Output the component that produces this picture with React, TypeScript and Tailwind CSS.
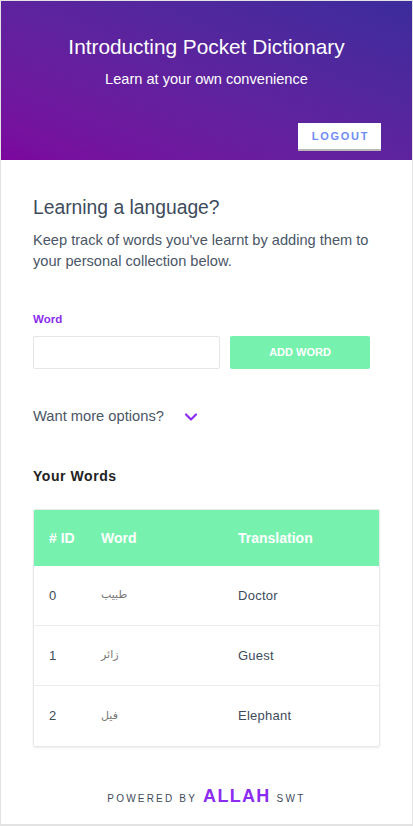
import React from "react";

const rows = [
  { id: 0, word: "طبيب", tr: "Doctor" },
  { id: 1, word: "زائر", tr: "Guest" },
  { id: 2, word: "فيل", tr: "Elephant" },
];

export default function App() {
  return (
    <div
      className="w-[413px] h-[826px] border border-b-2 border-[#e3e3e3] flex flex-col bg-white overflow-hidden"
      style={{ fontFamily: '"Liberation Sans", Arial, sans-serif' }}
    >
      <header className="h-[159px] shrink-0 bg-gradient-to-tr from-[#7c069f] to-[#3b2c9c] flex flex-col items-center pt-[34px] pr-[31px]">
        <h1 className="text-white text-[20.8px] leading-[24px] ml-[31px]">Introducting Pocket Dictionary</h1>
        <p className="text-white text-[14.6px] leading-[17px] mt-[12px] ml-[31px]">Learn at your own convenience</p>
        <div className="self-end mt-[35px]">
          <button className="w-[83px] h-[26px] bg-white text-[#6f8cf3] text-[11px] font-bold tracking-[0.16em] shadow-[0_2px_0_#b8b8b8] flex items-center justify-center pl-[2px]">
            LOGOUT
          </button>
        </div>
      </header>

      <main className="flex-1 flex flex-col px-[32px] pt-[37px]">
        <h2 className="text-[19.3px] leading-[22px] text-[#3d4b5c]">Learning a language?</h2>
        <p className="mt-[11px] text-[14.6px] leading-[21px] text-[#4a5666]">
          Keep track of words you've learnt by adding them to your personal collection below.
        </p>

        <label className="mt-[41px] text-[11.5px] leading-[13px] font-black text-[#8b2cf0]">Word</label>
        <div className="mt-[10px] flex gap-[10px]">
          <input className="w-[187px] h-[33px] border border-[#e6e6e6] rounded-[2px] outline-none" />
          <button className="w-[140px] h-[33px] bg-[#76f2ae] rounded-[2px] text-white text-[11px] font-bold">
            ADD WORD
          </button>
        </div>

        <div className="mt-[39px] flex items-center text-[14.7px] leading-[17px] text-[#4a5666]">
          <span>Want more options?</span>
          <svg className="ml-[20px] mt-[1px]" width="14" height="10" viewBox="0 0 14 10">
            <path d="M2 2.5 L7 7.5 L12 2.5" fill="none" stroke="#8b2cf0" strokeWidth="2.2" strokeLinecap="round" strokeLinejoin="round" />
          </svg>
        </div>

        <h3 className="mt-[43px] text-[14px] leading-[17px] font-bold tracking-[0.04em] text-[#222]">Your Words</h3>

        <div className="mt-[24px] w-[347px] border border-[#e8e8e8] rounded-[2px] shadow-[0_1px_2px_rgba(0,0,0,0.08)] overflow-hidden">
          <div className="grid grid-cols-[52px_137px_1fr] h-[56px] items-center bg-[#76f2ae] text-white text-[14px] font-bold">
            <div className="pl-[15px]"># ID</div>
            <div className="pl-[15px]">Word</div>
            <div className="pl-[15px]">Translation</div>
          </div>
          {rows.map((r, i) => (
            <div
              key={r.id}
              className={`grid grid-cols-[52px_137px_1fr] h-[60px] items-center text-[13px] ${i < rows.length - 1 ? "border-b border-[#ececec]" : ""}`}
            >
              <div className="pl-[15px] text-[#3d4b5c]">{r.id}</div>
              <div className="pl-[15px] text-[#777] text-[11px]" style={{ fontFamily: '"DejaVu Sans", "Noto Sans", sans-serif' }}>
                {r.word}
              </div>
              <div className="pl-[15px] text-[#3d4b5c] tracking-[0.02em]">{r.tr}</div>
            </div>
          ))}
        </div>

        <div className="mt-[36px] flex items-baseline justify-center">
          <span className="text-[10px] tracking-[2.2px] text-[#3d4b5c]">POWERED BY</span>
          <span className="ml-[6px] text-[18px] font-bold tracking-[1.3px] text-[#8b2cf0]">ALLAH</span>
          <span className="ml-[6px] text-[10px] tracking-[2.3px] text-[#3d4b5c]">SWT</span>
        </div>
      </main>
    </div>
  );
}
